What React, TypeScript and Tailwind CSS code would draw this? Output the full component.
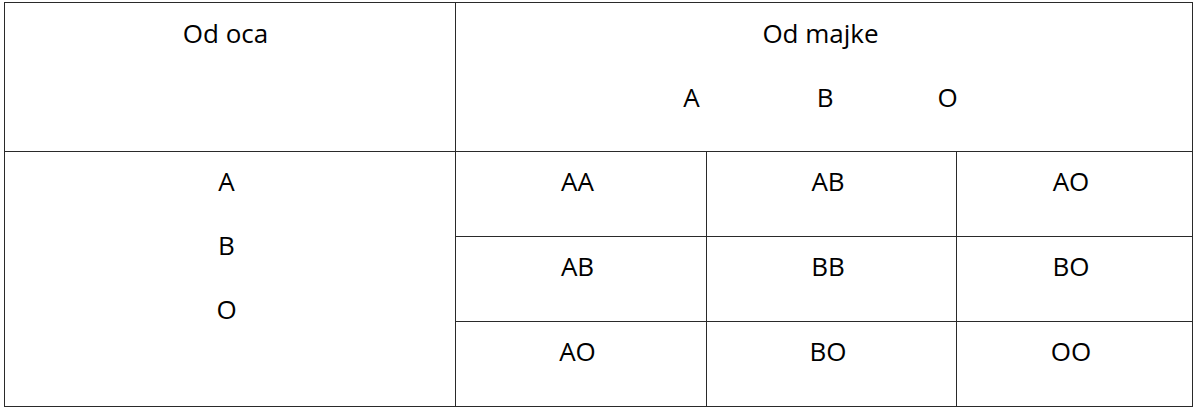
export default function App() {
  const grid = [
    ["AA", "AB", "AO"],
    ["AB", "BB", "BO"],
    ["AO", "BO", "OO"],
  ];

  return (
    <div className="w-[1200px] h-[411px] bg-white pl-[4px] pt-[2px] text-black font-['Open_Sans',sans-serif] text-[26px] leading-[36px]">
      <div className="grid w-[1189px] grid-cols-[451px_251px_250px_236px] grid-rows-[149px_85px_85px_85px] border-l border-t border-[#2a2a2a]">
        {/* Header */}
        <div className="border-r border-b border-[#2a2a2a] pt-3 pl-3 pr-[21px] text-center">Od oca</div>
        <div className="col-span-3 border-r border-b border-[#2a2a2a] pt-3 pl-3 pr-[19px] text-center">
          <p>Od majke</p>
          <div className="mt-[28px] flex justify-center">
            <span>A</span>
            <span className="ml-[117px]">B</span>
            <span className="ml-[104px]">O</span>
          </div>
        </div>

        {/* Father column */}
        <div className="row-span-3 border-r border-b border-[#2a2a2a] pt-[11px] pl-3 pr-[19px] text-center flex flex-col gap-[28px]">
          <p>A</p>
          <p>B</p>
          <p>O</p>
        </div>

        {/* Combinations */}
        {grid.flat().map((value, i) => (
          <div key={i} className="border-r border-b border-[#2a2a2a] pt-[11px] pl-3 pr-[19px] text-center">
            {value}
          </div>
        ))}
      </div>
    </div>
  );
}
